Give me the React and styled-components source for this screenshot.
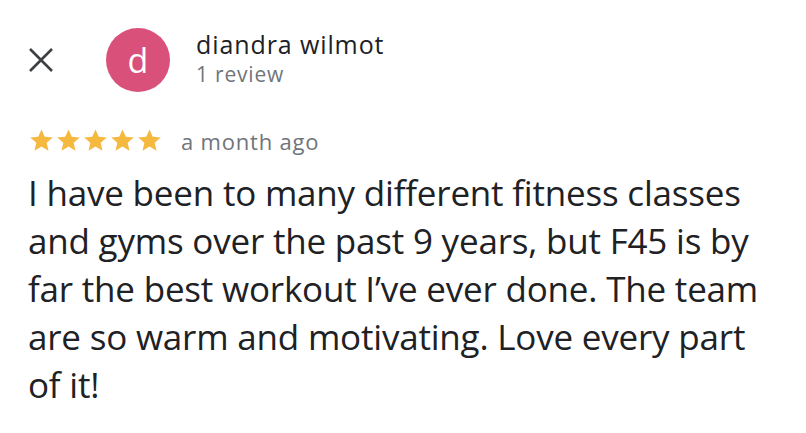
import styled, { createGlobalStyle } from "styled-components";

const Global = createGlobalStyle`
  body {
    margin: 0;
    background: #fff;
    font-family: "Open Sans", Roboto, sans-serif;
  }
`;

const Card = styled.div`
  width: 806px;
  height: 433px;
  box-sizing: border-box;
  padding: 28px 28px 0;
  color: #202124;
`;

const Header = styled.div`
  display: flex;
  align-items: center;
`;

const Close = styled.div`
  width: 26px;
  height: 26px;
  display: flex;
  align-items: center;
  justify-content: center;
  margin-right: 52px;
`;

const Avatar = styled.div`
  width: 64px;
  height: 64px;
  border-radius: 50%;
  background: #d9507a;
  color: #fff;
  display: flex;
  align-items: center;
  justify-content: center;
  font-size: 34px;
  margin-right: 26px;
`;

const Who = styled.div`
  display: flex;
  flex-direction: column;
  margin-top: -4px;
`;

const Name = styled.div`
  font-size: 25px;
  line-height: 32px;
  letter-spacing: 0.9px;
  color: #202124;
`;

const Sub = styled.div`
  font-size: 21px;
  line-height: 28px;
  letter-spacing: 0.8px;
  color: #70757a;
`;

const Meta = styled.div`
  display: flex;
  align-items: center;
  margin-top: 35px;
`;

const Stars = styled.div`
  display: flex;
  margin-right: 18px;
`;

const When = styled.div`
  font-size: 22px;
  line-height: 26px;
  letter-spacing: 0.8px;
  color: #70757a;
`;

const Body = styled.p`
  margin: 15px 0 0;
  font-size: 35px;
  line-height: 48px;
  letter-spacing: -0.2px;
  color: #202124;
  width: 745px;
`;

const Star = () => (
  <svg width="27" height="27" viewBox="0 0 24 24">
    <path
      fill="#f4b93e"
      d="M12 2.2l2.9 6.5 7.1.7-5.4 4.7 1.6 7-6.2-3.7-6.2 3.7 1.6-7L2 9.4l7.1-.7z"
    />
  </svg>
);

export default function App() {
  return (
    <>
      <Global />
      <Card>
        <Header>
          <Close>
            <svg width="26" height="26" viewBox="0 0 26 26">
              <path
                d="M2 2L24 24M24 2L2 24"
                stroke="#3c4043"
                strokeWidth="2.6"
              />
            </svg>
          </Close>
          <Avatar>d</Avatar>
          <Who>
            <Name>diandra wilmot</Name>
            <Sub>1 review</Sub>
          </Who>
        </Header>
        <Meta>
          <Stars>
            {[0, 1, 2, 3, 4].map((i) => (
              <Star key={i} />
            ))}
          </Stars>
          <When>a month ago</When>
        </Meta>
        <Body>
          I have been to many different fitness classes and gyms over the past
          9 years, but F45 is by far the best workout I’ve ever done. The team
          are so warm and motivating. Love every part of it!
        </Body>
      </Card>
    </>
  );
}
